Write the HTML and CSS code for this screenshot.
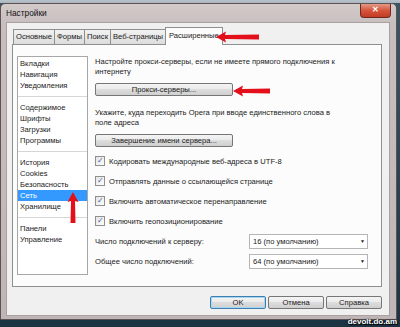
FILE: index.html
```html
<!DOCTYPE html>
<html>
<head>
    <title>Настройки</title>
    <link rel="stylesheet" href="styles.css">
</head>
<body>
    <section class="desktop">
        <section class="window">
            <div class="titlebar">
                <span class="title">Настройки</span>
                <span class="close">✕</span>
            </div>
            <div class="client">
                <div class="tabs">
                    <span class="tab">Основные</span>
                    <span class="tab">Формы</span>
                    <span class="tab">Поиск</span>
                    <span class="tab">Веб-страницы</span>
                    <span class="tab active">Расширенные</span>
                </div>
                <div class="panel">
                    <ul class="nav">
                        <li>Вкладки</li>
                        <li>Навигация</li>
                        <li>Уведомления</li>
                        <li class="sep"></li>
                        <li>Содержимое</li>
                        <li>Шрифты</li>
                        <li>Загрузки</li>
                        <li>Программы</li>
                        <li class="sep"></li>
                        <li>История</li>
                        <li>Cookies</li>
                        <li>Безопасность</li>
                        <li class="selected">Сеть</li>
                        <li>Хранилище</li>
                        <li class="sep"></li>
                        <li>Панели</li>
                        <li>Управление</li>
                    </ul>
                    <div class="pane">
                        <p class="note">Настройте прокси-серверы, если не имеете прямого подключения к интернету</p>
                        <button class="btn wide">Прокси-серверы...</button>
                        <p class="note second">Укажите, куда переходить Opera при вводе единственного слова в поле адреса</p>
                        <button class="btn wide">Завершение имени сервера...</button>
                        <div class="checks">
                            <label class="check"><span class="box">✓</span>Кодировать международные веб-адреса в UTF-8</label>
                            <label class="check"><span class="box">✓</span>Отправлять данные о ссылающейся странице</label>
                            <label class="check"><span class="box">✓</span>Включить автоматическое перенаправление</label>
                            <label class="check"><span class="box">✓</span>Включить геопозиционирование</label>
                        </div>
                        <div class="field">
                            <span class="field-label">Число подключений к серверу:</span>
                            <span class="select">16 (по умолчанию)<i>▼</i></span>
                        </div>
                        <div class="field">
                            <span class="field-label">Общее число подключений:</span>
                            <span class="select">64 (по умолчанию)<i>▼</i></span>
                        </div>
                    </div>
                </div>
                <div class="actions">
                    <button class="btn action default">OK</button>
                    <button class="btn action">Отмена</button>
                    <button class="btn action">Справка</button>
                </div>
            </div>
        </section>

        <svg class="arrow arrow-tab" width="44" height="12" viewBox="0 0 44 12">
            <path d="M0 6 L10 0.5 L9 4 L43 3.5 L43 8.5 L9 8 L10 11.5 Z" fill="#e3101c"/>
        </svg>
        <svg class="arrow arrow-btn" width="38" height="12" viewBox="0 0 38 12">
            <path d="M0 6 L10 0.5 L9 4 L37 3.5 L37 8.5 L9 8 L10 11.5 Z" fill="#e3101c"/>
        </svg>
        <svg class="arrow arrow-up" width="12" height="32" viewBox="0 0 12 32">
            <path d="M6 0 L11.5 10 L8 9 L8.5 31 L3.5 31 L4 9 L0.5 10 Z" fill="#e3101c"/>
        </svg>
        <span class="watermark">devolt.do.am</span>
    </section>
</body>
</html>
```

FILE: styles.css
```css
	body {
		margin: 0;
		font-family: "Liberation Sans", Arial, sans-serif;
		font-size: 7.6px;
		color: #1a1a1a;
	}
	.desktop {
		position: relative;
		width: 400px;
		height: 327px;
		overflow: hidden;
		background: linear-gradient(180deg, #b9c3cc 0, #aab4bd 3px, #3c5563 3px, #1b3342 100%);
	}
	.window {
		margin-top: 3px;
		width: 397px;
		height: 317px;
		box-sizing: border-box;
		border: 1px solid #5e5354;
		border-radius: 5px 5px 0 0;
		background: linear-gradient(180deg, #d3caca 0, #c8bebe 20px, #c1b6b7 100%);
		display: flex;
		flex-direction: column;
	}
	.titlebar {
		height: 18px;
		display: flex;
		align-items: flex-start;
		justify-content: space-between;
	}
	.title {
		margin: 4px 0 0 5px;
		font-size: 8.3px;
		color: #111;
	}
	.close {
		width: 29px;
		height: 13px;
		margin-right: 5px;
		border: 1px solid #6d2a22;
		border-top: none;
		border-radius: 0 0 4px 4px;
		background: linear-gradient(180deg, #e49a86 0, #d4553b 50%, #c33a22 100%);
		color: #fff;
		font-size: 8px;
		font-weight: bold;
		text-align: center;
		line-height: 12px;
	}
	.client {
		flex: 1;
		margin: 0 6px 3px 5px;
		background: #f0f0f0;
		border: 1px solid #a9a0a0;
		padding: 4px 0 0 5px;
		display: flex;
		flex-direction: column;
	}
	.tabs {
		display: flex;
		align-items: flex-end;
		height: 17px;
		margin-left: 1px;
	}
	.tab {
		height: 14px;
		line-height: 14px;
		padding: 0 2px;
		border: 1px solid #8e8f8f;
		border-bottom: none;
		margin-right: -1px;
		background: linear-gradient(180deg, #f2f2f2, #dcdcdc);
	}
	.tab.active {
		height: 17px;
		line-height: 16px;
		padding: 0 3px;
		background: #fcfcfc;
		position: relative;
		top: 1px;
	}
	.panel {
		width: 370px;
		height: 243px;
		box-sizing: border-box;
		border: 1px solid #8e8f8f;
		background: #fcfcfc;
		padding: 11px 0 0 4px;
		display: flex;
		gap: 7px;
	}
	.nav {
		list-style: none;
		margin: 0;
		padding: 1px 0 0;
		width: 71px;
		height: 219px;
		box-sizing: border-box;
		border: 1px solid #a7a7a7;
		background: #fff;
	}
	.nav li {
		height: 11px;
		line-height: 11px;
		padding-left: 2px;
	}
	.nav .sep {
		position: relative;
	}
	.nav .sep::after {
		content: "";
		position: absolute;
		left: 0;
		right: 0;
		top: 5px;
		border-top: 1px solid #d6d6d6;
	}
	.nav .selected {
		background: #3399ff;
		color: #fff;
	}
	.pane {
		flex: 1;
		padding-top: 1px;
	}
	.note {
		margin: 0;
		width: 242px;
		line-height: 10px;
	}
	.note.second {
		margin-top: 12px;
	}
	.btn {
		font-family: inherit;
		font-size: 7.6px;
		color: #1a1a1a;
		height: 13px;
		padding: 0;
		border: 1px solid #767676;
		border-radius: 2px;
		background: linear-gradient(180deg, #f4f4f4 0, #ebebeb 45%, #dddddd 50%, #cfcfcf 100%);
	}
	.btn.wide {
		display: block;
		width: 138px;
		margin-top: 6px;
	}
	.checks {
		margin-top: 4px;
	}
	.check {
		display: flex;
		align-items: center;
		height: 20px;
	}
	.box {
		width: 8px;
		height: 8px;
		border: 1px solid #8f8f8f;
		background: linear-gradient(135deg, #e4e4e4, #fdfdfd);
		margin-right: 4px;
		color: #4a5f97;
		font-size: 8px;
		line-height: 8px;
		text-align: center;
	}
	.field {
		display: flex;
		align-items: center;
		height: 20px;
	}
	.field-label {
		width: 154px;
	}
	.select {
		width: 119px;
		height: 15px;
		box-sizing: border-box;
		border: 1px solid #b5b5b5;
		background: #fff;
		line-height: 13px;
		padding-left: 3px;
		display: flex;
		justify-content: space-between;
	}
	.select i {
		font-style: normal;
		font-size: 5px;
		margin-right: 2px;
	}
	.actions {
		display: flex;
		justify-content: flex-end;
		gap: 2px;
		margin: 9px 7px 0 0;
	}
	.btn.action {
		width: 56px;
	}
	.btn.default {
		border-color: #3c7fb1;
		box-shadow: inset 0 0 0 1px #a6d6f2;
	}
	.arrow {
		position: absolute;
	}
	.arrow-tab {
		left: 216px;
		top: 31px;
	}
	.arrow-btn {
		left: 233px;
		top: 85px;
	}
	.arrow-up {
		left: 67px;
		top: 192px;
	}
	.watermark {
		position: absolute;
		right: 3px;
		bottom: 1px;
		color: #fff;
		font-weight: bold;
		font-size: 8px;
		text-shadow: 0 0 2px #000, 1px 1px 1px #000;
	}
```
